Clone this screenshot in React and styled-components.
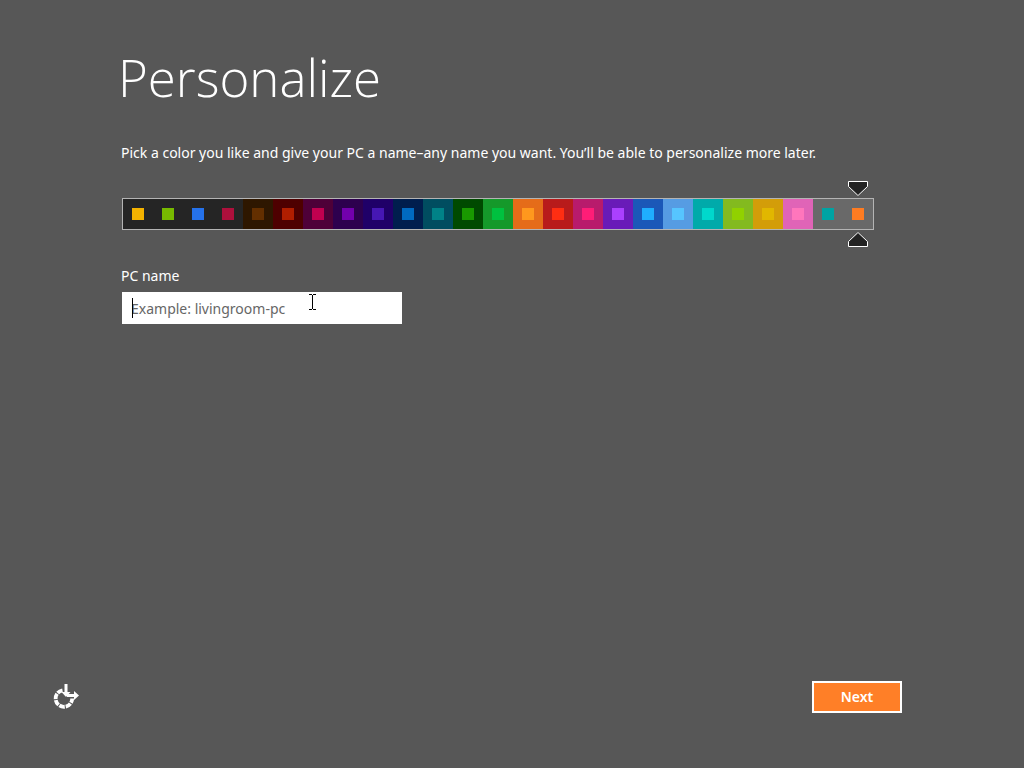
import { useState } from "react";
import styled, { createGlobalStyle } from "styled-components";

const GlobalStyle = createGlobalStyle`
    * {
        box-sizing: border-box;
    }

    body {
        margin: 0;
        background: #575757;
        color: #ffffff;
        font-family: "Noto Sans", "Open Sans", sans-serif;
        font-size: 14px;
        line-height: 20px;
    }
`

const Page = styled.div`
    display: flex;
    flex-direction: column;
    min-height: 100vh;
`

const Form = styled.form`
    display: flex;
    flex-direction: column;
    flex: 1;
`

const Content = styled.main`
    flex: 1;
    padding: 42px 122px 0 121px;
`

const Title = styled.h1`
    margin: 0 0 30px -3px;
    font-family: "Open Sans", sans-serif;
    font-size: 51px;
    font-weight: 300;
    line-height: 71px;
`

const Intro = styled.p`
    margin: 0 0 35px;
`

const Palette = styled.fieldset`
    display: flex;
    max-width: 752px;
    min-width: 0;
    margin: 0 0 36px 1px;
    padding: 0;
    border: 1px solid #b4b4b4;
`

const SwatchLabel = styled.label`
    position: relative;
    display: flex;
    flex: 1;
    height: 30px;
`

const SwatchInput = styled.input`
    appearance: none;
    flex: 1;
    min-width: 0;
    margin: 0;
    background: linear-gradient(${p => p.$accent}, ${p => p.$accent}) center / 12px 12px no-repeat ${p => p.$base};
    cursor: pointer;
    outline: none;
`

const Marker = styled.svg`
    position: absolute;
    left: calc(50% - 10px);
    ${p => p.$below ? "top: 100%; margin-top: 3px;" : "bottom: 100%; margin-bottom: 3px;"}
    width: 20px;
    height: 15px;
    fill: #222222;
    stroke: #ffffff;
    pointer-events: none;
`

const Field = styled.div`
    display: flex;
    flex-direction: column;
    gap: 6px;
`

const NameBox = styled.div`
    position: relative;
    width: 280px;
    max-width: 100%;
    margin-left: 1px;
`

const NameInput = styled.input`
    display: block;
    width: 100%;
    height: 32px;
    padding: 0 9px;
    border: 0;
    border-radius: 0;
    background: #ffffff;
    color: #222222;
    font: inherit;
    outline: none;

    &:placeholder-shown {
        caret-color: transparent;
    }

    &::placeholder {
        color: #666666;
        opacity: 1;
    }
`

const Caret = styled.span`
    position: absolute;
    left: 10px;
    top: 6px;
    width: 1px;
    height: 20px;
    background: #000000;
`

const Pointer = styled.svg`
    position: absolute;
    left: 187px;
    top: 2px;
    width: 7px;
    height: 16px;
    fill: none;
    stroke: #000000;
    pointer-events: none;
`

const Footer = styled.footer`
    display: flex;
    align-items: center;
    justify-content: space-between;
    padding: 0 122px 55px 52px;
`

const AccessButton = styled.button`
    display: flex;
    padding: 0;
    border: 0;
    background: none;
    color: #ffffff;
    cursor: pointer;
`

const NextButton = styled.button`
    width: 90px;
    height: 32px;
    padding: 0;
    border: 2px solid #ffffff;
    background: #ff7f27;
    color: #ffffff;
    font: inherit;
    font-weight: 600;
    cursor: pointer;
`

const SWATCHES = [
    { name: "Yellow on charcoal", base: "#252525", accent: "#f3b200" },
    { name: "Green on charcoal", base: "#252525", accent: "#77b900" },
    { name: "Blue on charcoal", base: "#252525", accent: "#2572eb" },
    { name: "Red on charcoal", base: "#252525", accent: "#ad103c" },
    { name: "Brown", base: "#2e1700", accent: "#632f00" },
    { name: "Dark red", base: "#4e0000", accent: "#b01e00" },
    { name: "Plum", base: "#4e0038", accent: "#c1004f" },
    { name: "Dark purple", base: "#2d004e", accent: "#7200ac" },
    { name: "Indigo", base: "#1f0068", accent: "#4617b4" },
    { name: "Navy", base: "#001e4e", accent: "#006ac1" },
    { name: "Dark teal", base: "#004d60", accent: "#008287" },
    { name: "Dark green", base: "#004a00", accent: "#199900" },
    { name: "Green", base: "#15992a", accent: "#00c13f" },
    { name: "Orange", base: "#e56c19", accent: "#ff981d" },
    { name: "Red", base: "#b81b1b", accent: "#ff2e12" },
    { name: "Pink", base: "#b81b6c", accent: "#ff1d77" },
    { name: "Purple", base: "#691bb8", accent: "#aa40ff" },
    { name: "Blue", base: "#1b58b8", accent: "#1faeff" },
    { name: "Sky blue", base: "#569ce3", accent: "#56c5ff" },
    { name: "Turquoise", base: "#00aaaa", accent: "#00d8cc" },
    { name: "Lime", base: "#83ba1f", accent: "#91d100" },
    { name: "Gold", base: "#d39d09", accent: "#e1b700" },
    { name: "Rose", base: "#e064b7", accent: "#ff76bc" },
    { name: "Teal on gray", base: "#696969", accent: "#00a3a3" },
    { name: "Orange on gray", base: "#696969", accent: "#fe7c22" },
]

const Swatch = ({ name, base, accent, selected, onSelect }) => (
    <SwatchLabel>
        <SwatchInput
            type="radio"
            name="color"
            value={name}
            aria-label={name}
            checked={selected}
            onChange={onSelect}
            $base={base}
            $accent={accent}
        />
        {selected && (
            <>
                <Marker viewBox="0 0 20 15" aria-hidden="true">
                    <path d="M.5.5h19v5L10.500 14h-1L.5 5.500z" />
                </Marker>
                <Marker $below viewBox="0 0 20 15" aria-hidden="true">
                    <path d="M.5 14.500h19v-5L10.500 1h-1L.5 9.500z" />
                </Marker>
            </>
        )}
    </SwatchLabel>
)

// Dashed ring with a down arrow and a right arrow meeting near its center
const AccessIcon = () => (
    <svg width="28" height="28" viewBox="0 0 28 28" fill="none" stroke="currentColor" aria-hidden="true">
        <path
            d="M10.500 7.300A8.300 8.300 0 1 0 20.200 15.500"
            strokeWidth="3.800"
            strokeDasharray="5.600 1"
        />
        <path d="M14 1v9M15 12.500h8" strokeWidth="3" />
        <path d="M9.500 9l4.500 5 4.500-5z" fill="currentColor" stroke="none" />
        <path d="M22 8l5 4.500-5 4.500z" fill="currentColor" stroke="none" />
    </svg>
)

export default function App() {
    const [color, setColor] = useState("Orange on gray")
    const [pcName, setPcName] = useState("")

    return (
        <Page>
            <GlobalStyle />
            <Form onSubmit={e => e.preventDefault()}>
                <Content>
                    <Title>Personalize</Title>
                    <Intro>
                        Pick a color you like and give your PC a name–any name you want. You’ll be able to personalize more later.
                    </Intro>
                    <Palette aria-label="Color">
                        {SWATCHES.map(swatch => (
                            <Swatch
                                key={swatch.name}
                                {...swatch}
                                selected={color === swatch.name}
                                onSelect={() => setColor(swatch.name)}
                            />
                        ))}
                    </Palette>
                    <Field>
                        <label htmlFor="pc-name">PC name</label>
                        <NameBox>
                            <NameInput
                                id="pc-name"
                                type="text"
                                placeholder="Example: livingroom-pc"
                                value={pcName}
                                onChange={e => setPcName(e.target.value)}
                            />
                            {!pcName && <Caret />}
                            <Pointer viewBox="0 0 7 16" aria-hidden="true">
                                <path d="M0 .5h3M4 .5h3M3.500 1v14M0 15.500h3M4 15.500h3" />
                            </Pointer>
                        </NameBox>
                    </Field>
                </Content>
                <Footer>
                    <AccessButton type="button" aria-label="Ease of access">
                        <AccessIcon />
                    </AccessButton>
                    <NextButton type="submit">Next</NextButton>
                </Footer>
            </Form>
        </Page>
    )
}
